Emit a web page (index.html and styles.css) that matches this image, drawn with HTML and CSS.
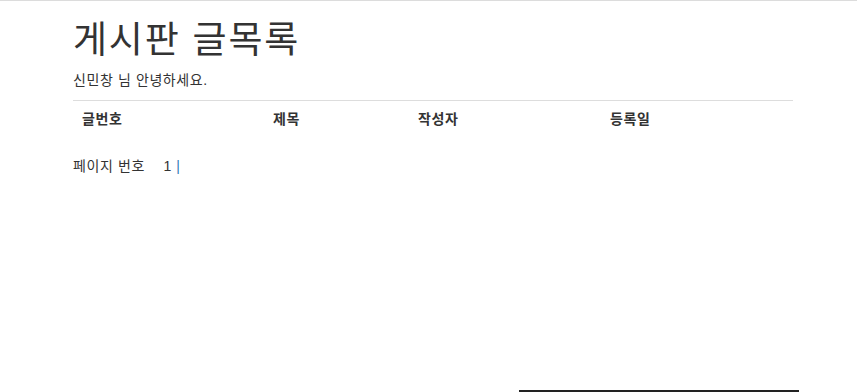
FILE: index.html
```html
<!DOCTYPE html>
<html lang="ko">
<head>
    <meta charset="UTF-8">
    <title>게시판 글목록</title>
    <link rel="stylesheet" href="styles.css">
</head>
<body>
    <div class="container">
        <h1>게시판 글목록</h1>
        <p class="greeting">신민창 님 안녕하세요.</p>
        <table class="board">
            <thead>
                <tr>
                    <th class="col-no">글번호</th>
                    <th class="col-title">제목</th>
                    <th class="col-writer">작성자</th>
                    <th class="col-date">등록일</th>
                </tr>
            </thead>
            <tbody></tbody>
        </table>
        <div class="paging">
            페이지 번호 <span class="pages"><a href="#">1</a> <span class="sep">|</span></span>
        </div>
    </div>
    <div class="scroll-thumb"></div>
</body>
</html>
```

FILE: styles.css
```css
html, body {
    height: 100%;
}
body {
    margin: 0;
    border-top: 1px solid #dcdcdc;
    box-sizing: border-box;
    font-family: "Liberation Sans", "Noto Sans CJK KR", sans-serif;
    font-size: 14px;
    line-height: 1.42857;
    color: #333;
    background: #fff;
    position: relative;
    overflow: hidden;
    letter-spacing: 0.6px;
}
.container {
    width: 720px;
    margin-left: 73px;
}
h1 {
    font-size: 37px;
    font-weight: 400;
    line-height: 1.1;
    letter-spacing: 1.8px;
    margin: 20px 0 9px;
}
.greeting {
    margin: 0 0 9px;
}
.board {
    width: 100%;
    border-collapse: collapse;
    border-top: 1px solid #ddd;
}
.board th {
    text-align: left;
    font-weight: bold;
    padding: 9px 8px 8px 9px;
}
.col-no { width: 174px; }
.col-title { width: 128px; }
.col-writer { width: 175px; }
.paging {
    margin-top: 19px;
}
.pages {
    margin-left: 14px;
}
.pages a {
    color: #333;
    text-decoration: none;
}
.sep {
    color: #337ab7;
}
.scroll-thumb {
    position: absolute;
    left: 519px;
    width: 280px;
    bottom: 0;
    height: 2px;
    background: #222;
}
```
